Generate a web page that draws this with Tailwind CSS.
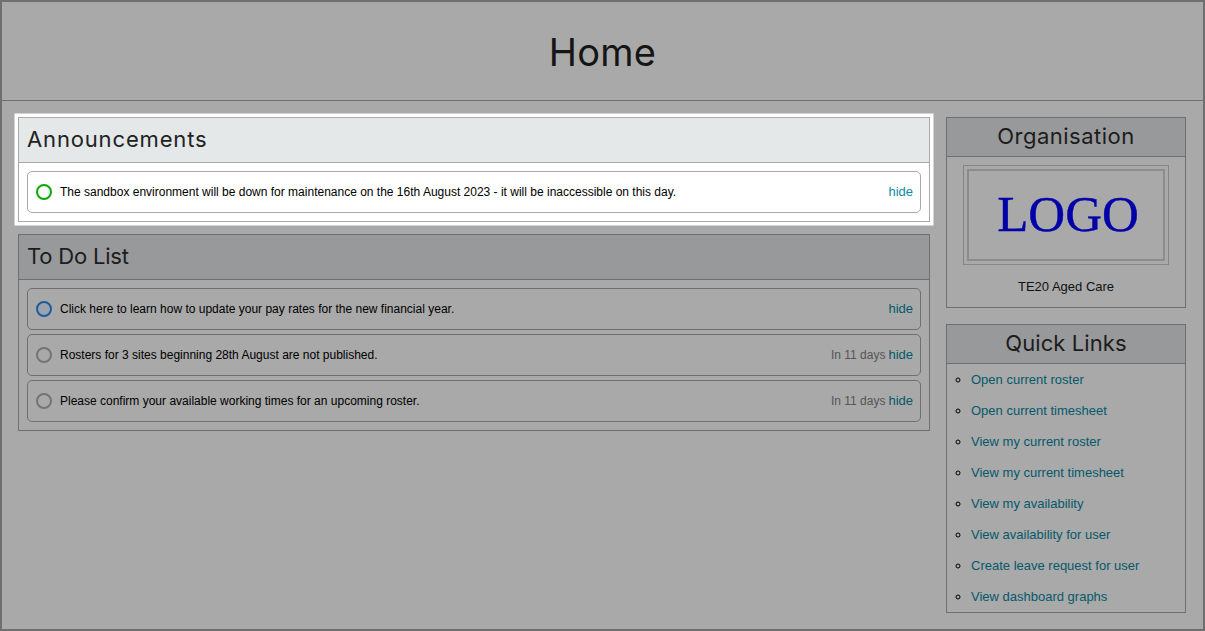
<!DOCTYPE html>
<html>
<head>
<meta charset="utf-8">
<script src="https://cdn.jsdelivr.net/npm/@tailwindcss/browser@4"></script>
<title>Home</title>
</head>
<body class="bg-[#a9a9a9]">
<div class="h-[631px] w-[1205px] overflow-hidden border-2 border-[#6f6f6f] bg-[#a9a9a9] font-['Liberation_Sans',sans-serif] text-[12px] text-black">
  <header class="flex h-[99px] items-center justify-center border-b border-[#6f6f6f] pt-[2px]">
    <h1 class="font-['Inter',sans-serif] text-[38px] font-normal tracking-[0.2px] text-[#151515]">Home</h1>
  </header>
  <main class="flex items-start gap-4 pl-4 pr-[17px] pt-4">
    <div class="flex w-[912px] flex-col gap-3">
      <section class="border border-[#a9a9a9] bg-white shadow-[0_0_0_3.5px_#fff]">
        <h2 class="flex h-[45px] items-center border-b border-[#a9a9a9] bg-[#e4e8e9] pb-[2px] pl-2 font-['Inter',sans-serif] text-[22px] font-normal tracking-[0.85px] text-[#222]">Announcements</h2>
        <div class="p-2">
          <div class="flex h-[42px] items-center rounded-[5px] border border-[#a9a9a9] bg-white pl-2 pr-[7px]">
            <span class="h-4 w-4 shrink-0 rounded-full border-2 border-[#0ca80c]"></span>
            <span class="ml-2 flex-1">The sandbox environment will be down for maintenance on the 16th August 2023 - it will be inaccessible on this day.</span>
            <a class="text-[13px] text-[#0e8aa3]">hide</a>
          </div>
        </div>
      </section>
      <section class="border border-[#6f6f6f]">
        <h2 class="flex h-[45px] items-center border-b border-[#6f6f6f] bg-[#98999b] pb-[2px] pl-2 font-['Inter',sans-serif] text-[22px] font-normal tracking-[-0.2px] text-[#1c1c1c]">To Do List</h2>
        <div class="flex flex-col gap-1 p-2">
          <div class="flex h-[42px] items-center rounded-[5px] border border-[#6f6f6f] pl-2 pr-[7px]">
            <span class="h-4 w-4 shrink-0 rounded-full border-2 border-[#1f5c99] bg-[#98a4ae]"></span>
            <span class="ml-2 flex-1">Click here to learn how to update your pay rates for the new financial year.</span>
            <a class="text-[13px] text-[#04596a]">hide</a>
          </div>
          <div class="flex h-[42px] items-center rounded-[5px] border border-[#6f6f6f] pl-2 pr-[7px]">
            <span class="h-4 w-4 shrink-0 rounded-full border-2 border-[#747474]"></span>
            <span class="ml-2 flex-1">Rosters for 3 sites beginning 28th August are not published.</span>
            <span class="mr-[3px] text-[#555]">In 11 days</span>
            <a class="text-[13px] text-[#04596a]">hide</a>
          </div>
          <div class="flex h-[42px] items-center rounded-[5px] border border-[#6f6f6f] pl-2 pr-[7px]">
            <span class="h-4 w-4 shrink-0 rounded-full border-2 border-[#747474]"></span>
            <span class="ml-2 flex-1">Please confirm your available working times for an upcoming roster.</span>
            <span class="mr-[3px] text-[#555]">In 11 days</span>
            <a class="text-[13px] text-[#04596a]">hide</a>
          </div>
        </div>
      </section>
    </div>
    <aside class="flex w-[240px] flex-col gap-4">
      <section class="h-[191px] border border-[#6f6f6f]">
        <h2 class="flex h-[39px] items-center justify-center border-b border-[#6f6f6f] bg-[#98999b] pb-[2px] font-['Inter',sans-serif] text-[22px] font-normal tracking-[0.5px] text-[#1c1c1c]">Organisation</h2>
        <div class="mx-auto mt-2 flex h-[100px] w-[206px] border border-[#858585] p-[3px]">
          <div class="flex flex-1 items-center justify-center border-2 border-[#8c8c8c] pb-[2px] pl-1 font-['Liberation_Serif',serif] text-[51px] leading-none text-[#0202a8] [-webkit-text-stroke:0.4px_#0202a8]">LOGO</div>
        </div>
        <p class="mt-[12px] text-center text-[13px] text-[#111]">TE20 Aged Care</p>
      </section>
      <section class="h-[289px] border border-[#6f6f6f]">
        <h2 class="flex h-[39px] items-center justify-center border-b border-[#6f6f6f] bg-[#98999b] pb-[2px] font-['Inter',sans-serif] text-[22px] font-normal tracking-[0.1px] text-[#1c1c1c]">Quick Links</h2>
        <ul class="flex list-[circle] flex-col pl-6 pt-[8px] text-[13px] text-[#04596a] marker:text-black">
          <li class="h-[31px] leading-[16px]"><a>Open current roster</a></li>
          <li class="h-[31px] leading-[16px]"><a>Open current timesheet</a></li>
          <li class="h-[31px] leading-[16px]"><a>View my current roster</a></li>
          <li class="h-[31px] leading-[16px]"><a>View my current timesheet</a></li>
          <li class="h-[31px] leading-[16px]"><a>View my availability</a></li>
          <li class="h-[31px] leading-[16px]"><a>View availability for user</a></li>
          <li class="h-[31px] leading-[16px]"><a>Create leave request for user</a></li>
          <li class="h-[16px] leading-[16px]"><a>View dashboard graphs</a></li>
        </ul>
      </section>
    </aside>
  </main>
</div>
</body>
</html>
